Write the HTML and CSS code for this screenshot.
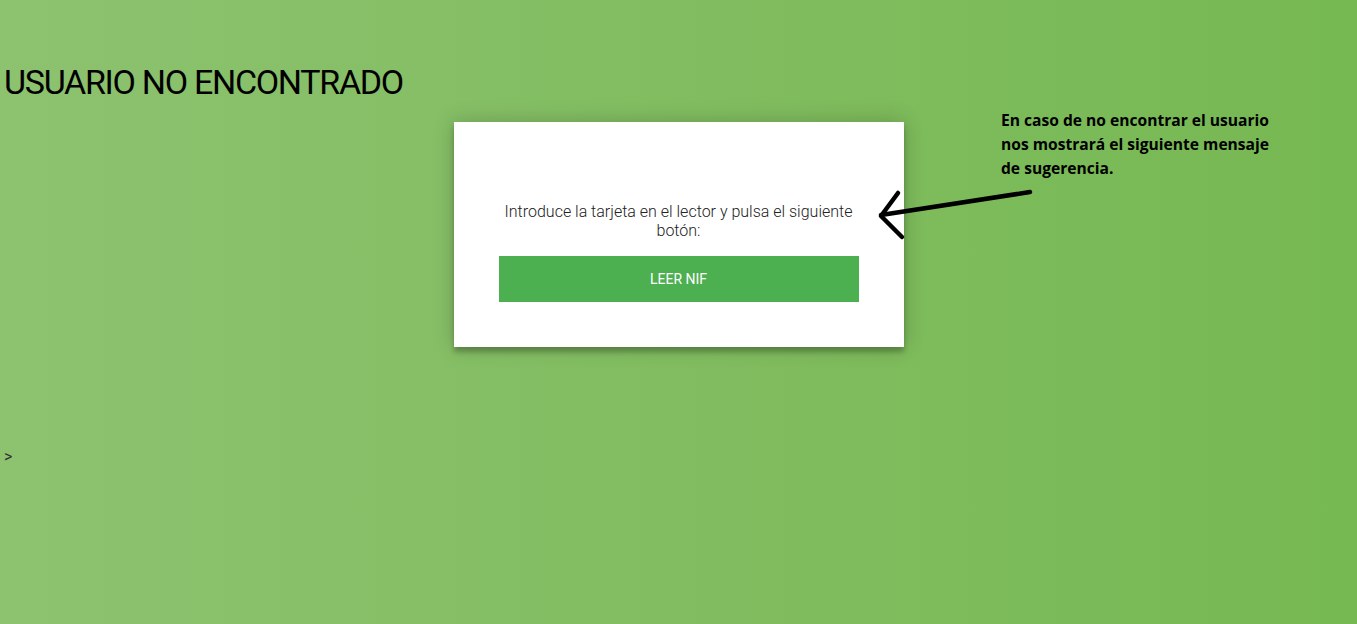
FILE: index.html
```html
<!DOCTYPE html>
<html lang="es">
<head>
<meta charset="utf-8">
<title>Usuario no encontrado</title>
<link rel="stylesheet" href="styles.css">
</head>
<body>
<h1 class="title">USUARIO NO ENCONTRADO</h1>
<div class="form">
  <div class="spacer"></div>
  <p class="message">Introduce la tarjeta en el lector y pulsa el siguiente botón:</p>
  <button class="btn">LEER NIF</button>
</div>
<div class="stray">&gt;</div>

<div class="note">En caso de no encontrar el usuario<br>nos mostrará el siguiente mensaje<br>de sugerencia.</div>
<svg class="arrow" width="170" height="60" viewBox="870 185 170 60" xmlns="http://www.w3.org/2000/svg">
  <path d="M1030 192 L881 215" stroke="#000" stroke-width="4.5" stroke-linecap="round" fill="none"/>
  <path d="M898 193 L881 216 L902 237" stroke="#000" stroke-width="4.5" stroke-linecap="round" stroke-linejoin="round" fill="none"/>
</svg>
</body>
</html>
```
FILE: styles.css
```css
html, body {
  height: 100%;
}
body {
  margin: 0;
  padding: 0 4px;
  background: linear-gradient(to left, #76b852, #8dc26f);
  font-family: Roboto, "Liberation Sans", sans-serif;
  position: relative;
  overflow: hidden;
}
.title {
  margin: 61px 0 19px;
  font-size: 34px;
  font-weight: 400;
  letter-spacing: -1.3px;
  line-height: 42px;
  color: #000;
}
.form {
  background: #fff;
  width: 360px;
  margin: 0 auto 100px;
  padding: 45px;
  text-align: center;
  box-shadow: 0 0 20px 0 rgba(0,0,0,0.2), 0 5px 5px 0 rgba(0,0,0,0.24);
}
.spacer {
  height: 35px;
}
.message {
  margin: 0 0 16px;
  font-size: 16px;
  font-weight: 300;
  line-height: 19px;
  color: #222;
}
.btn {
  display: block;
  width: 100%;
  border: 0;
  padding: 15px;
  background: #4caf50;
  color: #fff;
  font-family: Roboto, "Liberation Sans", sans-serif;
  font-size: 14px;
  line-height: 16px;
  text-transform: uppercase;
}
.stray {
  font-size: 16px;
  line-height: 19px;
  color: #333;
}
.note {
  position: absolute;
  left: 1001px;
  top: 108px;
  font-family: "Open Sans", Lato, sans-serif;
  font-weight: 700;
  font-size: 15.6px;
  line-height: 24px;
  color: #000;
}
.arrow {
  position: absolute;
  left: 870px;
  top: 185px;
}
```
